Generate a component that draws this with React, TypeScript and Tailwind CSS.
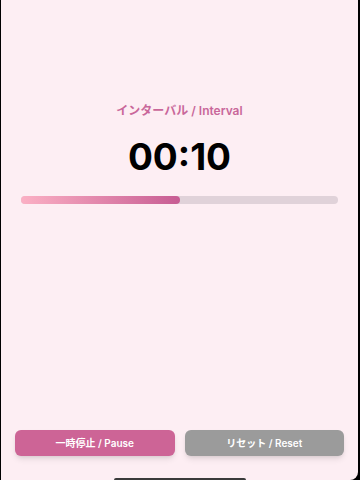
export default function App() {
  const progress = 0.5;

  return (
    <div className="h-[480px] w-[360px] bg-black" style={{ fontFamily: "Inter, 'Noto Sans CJK JP', sans-serif" }}>
      <div className="relative ml-[1px] mr-[2px] flex h-[480px] flex-col rounded-br-[8px] bg-[#fdeef3]">
        <div className="pt-[103px] text-center text-[12px] font-semibold leading-4 text-[#c9679a]">
          インターバル / Interval
        </div>
        <div className="mt-[16px] text-center text-[37px] font-bold leading-[44px] text-black">
          00:10
        </div>
        <div className="mx-[20px] mt-[17px] h-[8px] rounded-full bg-[#e0d2d9]">
          <div
            className="h-full rounded-full bg-gradient-to-r from-[#fbb0c4] to-[#c75c93]"
            style={{ width: `${progress * 100}%` }}
          />
        </div>
        <div className="flex-1" />
        <div className="mb-[24px] flex gap-[10px] px-[14px]">
          <button className="h-[26px] flex-1 rounded-[6px] bg-[#cd6496] text-[10px] font-semibold text-white shadow-md">
            一時停止 / Pause
          </button>
          <button className="h-[26px] flex-1 rounded-[6px] bg-[#9b9b9b] text-[10px] font-semibold text-white shadow-md">
            リセット / Reset
          </button>
        </div>
        <div className="absolute bottom-0 left-[113px] h-[2px] w-[132px] rounded-t-full bg-[#3a3a3a]" />
      </div>
    </div>
  );
}
